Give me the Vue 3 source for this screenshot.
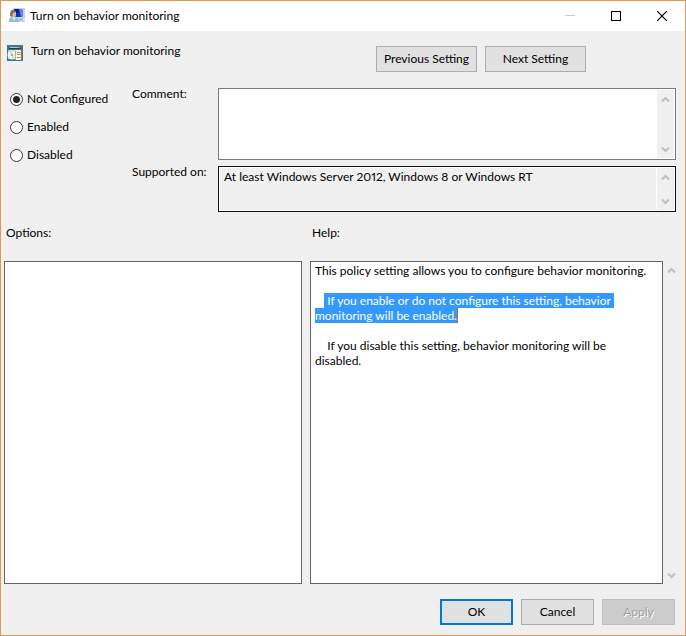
<script setup>
import { ref } from 'vue'

const states = ['Not Configured', 'Enabled', 'Disabled']
const state = ref('Not Configured')
const comment = ref('')
const supported = ref('At least Windows Server 2012, Windows 8 or Windows RT')
</script>

<template>
  <main class="window">
    <header class="titlebar">
      <svg class="app-icon" width="16" height="16" viewBox="0 0 16 16" aria-hidden="true">
        <path d="M4 0h12v11H4z" fill="#c9d3e0" />
        <path d="M5 1h9v8H5z" fill="#1233bd" />
        <path d="M10 1h4v8h-2z" fill="#5b8af5" />
        <path d="M5 1h5l-1 4H5z" fill="#0a1a8c" />
        <path d="M10 11h4v1h-4z" fill="#9aa8ba" />
        <path d="M9 12h7v2H9z" fill="#ccd5de" />
        <path d="M0 14c0-4 1-5 4-5s6 1 6 5z" fill="#8dbbe0" />
        <path d="M3 9l2 4 2-4z" fill="#e4f0fa" />
        <path d="M3 4h4v4l-2 2-2-1z" fill="#dfb88f" />
        <path d="M1 8c0-5 1-6 3-6s3 1 3 2L4 5 3 9z" fill="#7c725f" />
      </svg>
      <h1 class="title">Turn on behavior monitoring</h1>
      <button class="caption" type="button" aria-label="Minimize" disabled>
        <svg width="10" height="10" viewBox="0 0 10 10"><path d="M0 4h10v1H0z" fill="#cccccc" /></svg>
      </button>
      <button class="caption" type="button" aria-label="Maximize">
        <svg width="10" height="10" viewBox="0 0 10 10"><path d="M0 0h10v10H0zM1 1v8h8V1z" fill="#000" fill-rule="evenodd" /></svg>
      </button>
      <button class="caption" type="button" aria-label="Close">
        <svg width="10" height="10" viewBox="0 0 10 10"><path d="M0 0l10 10M10 0L0 10" stroke="#000" stroke-width="1.200" /></svg>
      </button>
    </header>

    <section class="heading">
      <svg class="policy-icon" width="16" height="16" viewBox="0 0 16 16" aria-hidden="true">
        <path d="M0 0h16v16H0z" fill="#3f7a7c" />
        <path d="M2 1h13v1H2z" fill="#5d6f84" />
        <path d="M3 2h8v1H3z" fill="#a9c0e4" />
        <path d="M11 2h2v1h-2z" fill="#c98068" />
        <path d="M2 3h12v1H2z" fill="#2c3560" />
        <path d="M1 5h14v9H1z" fill="#c3cac8" />
        <circle cx="5" cy="10" r="4.500" fill="#f1f3f0" />
        <path d="M5 10L2 7l3-1zM5 10l3 3-3 1z" fill="#c3dfd0" />
        <circle cx="5" cy="10" r="1" fill="#8a9391" />
        <path d="M9 5h5v10H8V6z" fill="#fbf4dc" />
        <path d="M14 5h1v10h-1z" fill="#7f7a66" />
        <path d="M8 6h1v9H8z" fill="#b8ae8c" />
        <path d="M10 7h1v1h-1zM10 9h1v1h-1zM10 12h1v1h-1z" fill="#ad7043" />
        <path d="M11 7h3v1h-3zM11 9h3v1h-3zM11 12h3v1h-3z" fill="#b5a67c" />
      </svg>
      <span class="setting-name">Turn on behavior monitoring</span>
      <div class="nav">
        <button class="btn wide" type="button">Previous Setting</button>
        <button class="btn wide" type="button">Next Setting</button>
      </div>
    </section>

    <section class="form">
      <div class="radios" role="radiogroup" aria-label="State">
        <label v-for="s in states" :key="s" class="radio">
          <input v-model="state" type="radio" name="state" :value="s" />
          <span>{{ s }}</span>
        </label>
      </div>
      <div class="fields">
        <label for="comment">Comment:</label>
        <div class="box comment">
          <textarea id="comment" v-model="comment"></textarea>
          <div class="scroll" aria-hidden="true">
            <svg class="arrow" viewBox="0 0 9 7"><path d="M1 5.500L4.500 2 8 5.500" /></svg>
            <svg class="arrow" viewBox="0 0 9 7"><path d="M1 1.500L4.500 5 8 1.500" /></svg>
          </div>
        </div>
        <label for="supported">Supported on:</label>
        <div class="box supported">
          <textarea id="supported" v-model="supported" readonly></textarea>
          <div class="scroll" aria-hidden="true">
            <svg class="arrow" viewBox="0 0 9 7"><path d="M1 5.500L4.500 2 8 5.500" /></svg>
            <svg class="arrow" viewBox="0 0 9 7"><path d="M1 1.500L4.500 5 8 1.500" /></svg>
          </div>
        </div>
      </div>
    </section>

    <section class="panels">
      <h2 class="panel-label">Options:</h2>
      <h2 class="panel-label">Help:</h2>
      <div class="panel"></div>
      <div class="help">
        <div class="panel help-text">
          <p>This policy setting allows you to configure behavior monitoring.</p>
          <p><span>{{ '   ' }}</span><mark>{{ ' If you enable or do not configure this setting, behavior ' }}</mark><br /><mark class="caret">monitoring will be enabled.</mark></p>
          <p>{{ '    If you disable this setting, behavior monitoring will be' }}<br />disabled.</p>
        </div>
        <div class="scroll" aria-hidden="true">
          <svg class="arrow" viewBox="0 0 9 7"><path d="M1 5.500L4.500 2 8 5.500" /></svg>
          <svg class="arrow" viewBox="0 0 9 7"><path d="M1 1.500L4.500 5 8 1.500" /></svg>
        </div>
      </div>
    </section>

    <footer class="footer">
      <button class="btn primary" type="button">OK</button>
      <button class="btn" type="button">Cancel</button>
      <button class="btn" type="button" disabled>Apply</button>
    </footer>
  </main>
</template>

<style>
body {
  margin: 0;
}
</style>

<style scoped>
.window {
  box-sizing: border-box;
  display: flex;
  flex-direction: column;
  min-height: 100vh;
  border: 1px solid #dc9a50;
  background: #f0f0f0;
  color: #000;
  font: 12px/16px "Segoe UI", Lato, "Open Sans", sans-serif;
  font-variant-numeric: proportional-nums;
}
.window * {
  box-sizing: border-box;
}
button,
textarea {
  font: inherit;
  font-variant-numeric: inherit;
  color: inherit;
}
h1,
h2,
p {
  margin: 0;
  font: inherit;
}
svg {
  display: block;
  flex: none;
}
.titlebar {
  display: flex;
  align-items: center;
  height: 30px;
  padding-left: 8px;
  background: #fff;
}
.title {
  flex: 1;
  padding-left: 5px;
}
.caption {
  display: flex;
  align-items: center;
  justify-content: center;
  width: 46px;
  height: 30px;
  padding: 0;
  border: 0;
  background: transparent;
}
.heading {
  display: flex;
  align-items: flex-start;
  padding: 12px 99px 16px 6px;
}
.policy-icon {
  margin-top: 2px;
}
.setting-name {
  flex: 1;
  padding-left: 8px;
}
.nav {
  display: flex;
  gap: 8px;
  padding-top: 3px;
}
.btn {
  width: 73px;
  height: 26px;
  padding: 0;
  border: 1px solid #adadad;
  background: #e1e1e1;
  text-align: center;
  white-space: nowrap;
}
.btn.wide {
  width: 101px;
}
.btn.primary {
  border: 2px solid #0078d7;
}
.btn:disabled {
  border-color: #bfbfbf;
  background: #cccccc;
  color: #a0a0a0;
  text-shadow: 1px 1px 0 #fff;
}
.form {
  display: grid;
  grid-template-columns: 122px 1fr;
  padding: 0 9px;
}
.radios {
  display: flex;
  flex-direction: column;
  gap: 12px;
  padding-top: 3px;
}
.radio {
  display: flex;
  align-items: center;
  gap: 4px;
}
.radio input {
  appearance: none;
  display: grid;
  place-items: center;
  width: 13px;
  height: 13px;
  margin: 0;
  border: 1px solid #333;
  border-radius: 50%;
  background: #fff;
}
.radio input:checked::before {
  content: "";
  width: 7px;
  height: 7px;
  border-radius: 50%;
  background: #222;
}
.fields {
  display: grid;
  grid-template-columns: 86px 1fr;
  row-gap: 6px;
}
.fields label {
  line-height: 12px;
}
.box {
  display: flex;
  padding: 1px;
  border: 1px solid #7a7a7a;
  background: #fff;
}
.comment {
  height: 72px;
}
.supported {
  height: 46px;
  border-color: #111;
}
.box textarea {
  flex: 1;
  min-width: 0;
  padding: 1px 4px;
  border: 0;
  outline: 0;
  resize: none;
  overflow: hidden;
  background: #fff;
}
.supported textarea {
  margin-right: 1px;
  background: #f0f0f0;
}
.scroll {
  display: flex;
  flex-direction: column;
  align-items: center;
  justify-content: space-between;
  width: 17px;
  padding: 6px 0 5px;
  background: #f0f0f0;
}
.arrow {
  width: 9px;
  height: 7px;
  fill: none;
  stroke: #bfbfbf;
  stroke-width: 2;
}
.panels {
  flex: 1;
  display: grid;
  grid-template-columns: 298fr 370fr;
  grid-template-rows: auto 1fr;
  column-gap: 8px;
  padding: 13px 5px 0 3px;
}
.panel-label {
  padding: 0 2px 20px;
}
.panel {
  border: 1px solid #646464;
  background: #fff;
}
.help {
  display: flex;
}
.help-text {
  flex: 1;
  min-width: 0;
  display: flex;
  flex-direction: column;
  gap: 15px;
  padding: 1px 4px;
  line-height: 15px;
  white-space: pre-wrap;
}
mark {
  display: inline-block;
  vertical-align: top;
  background: #3399ff;
  color: #fff;
  white-space: pre;
}
.caret {
  border-right: 1px solid #cc6600;
}
.footer {
  display: flex;
  justify-content: flex-end;
  gap: 8px;
  padding: 15px 10px 10px;
}
</style>
